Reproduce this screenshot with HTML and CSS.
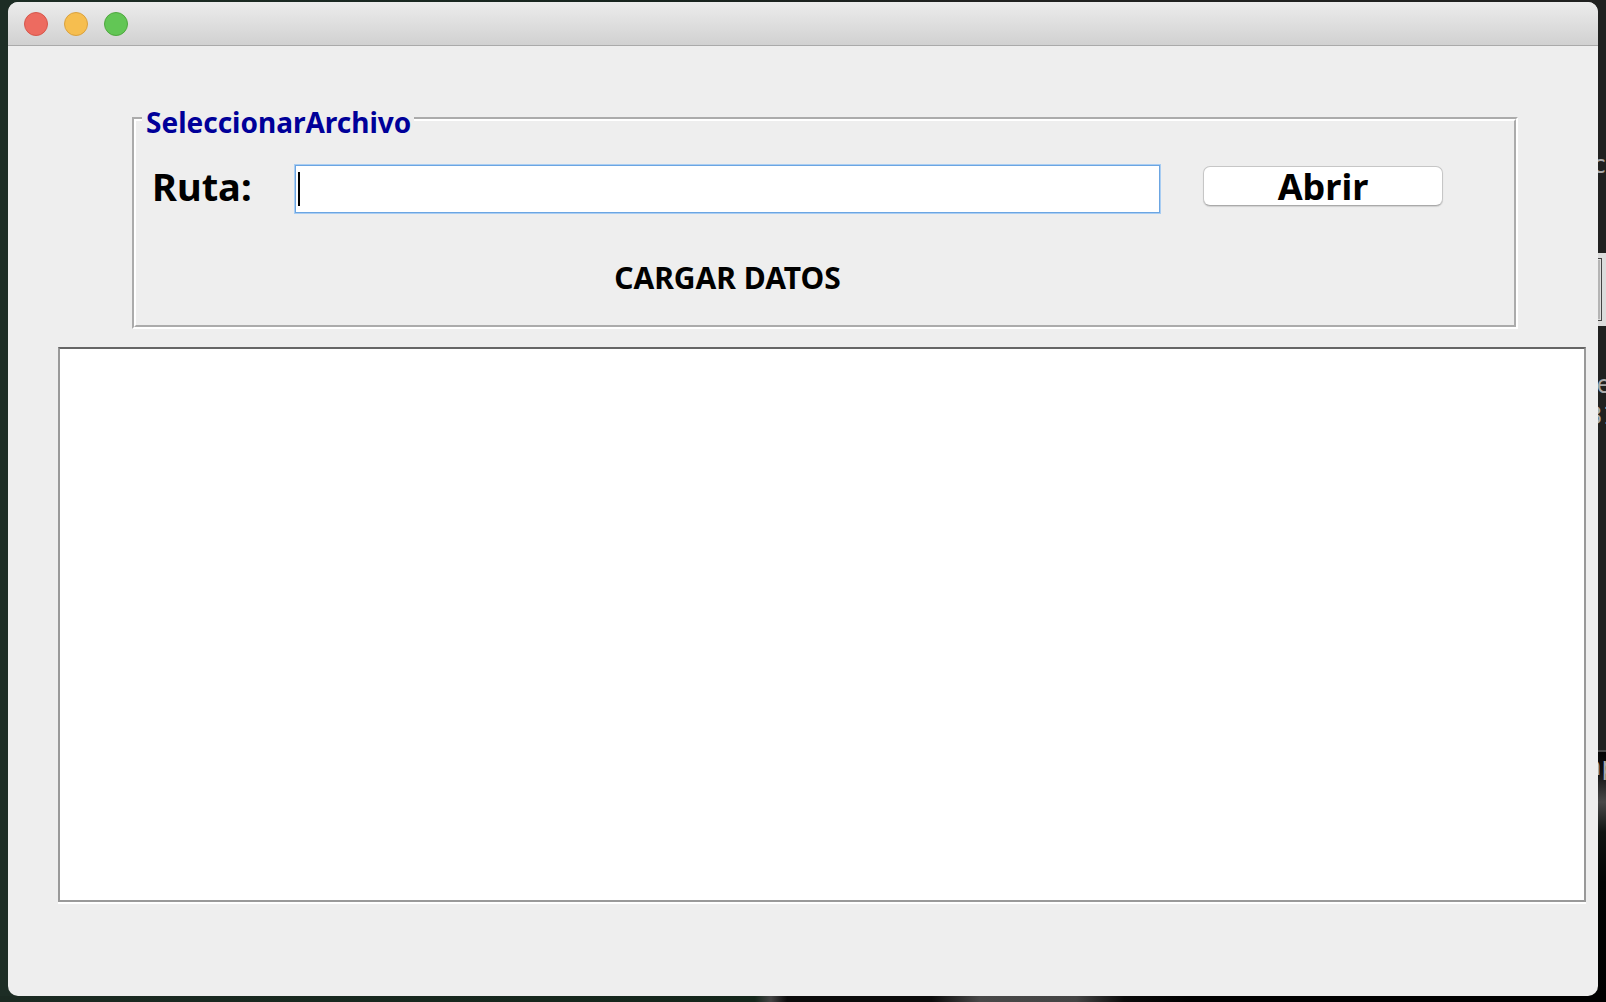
FILE: index.html
```html
<!DOCTYPE html>
<html lang="es">
<head>
<meta charset="utf-8">
<meta name="viewport" content="width=device-width, initial-scale=1">
<title>Seleccionar archivo</title>
<link rel="stylesheet" href="styles.css">
</head>
<body class="desktop">
<div class="backdrop" aria-hidden="true">
  <div class="panel panel-light"></div>
  <div class="panel panel-dark"></div>
  <div class="photo-side"></div>
  <div class="photo-bottom"></div>
  <span class="scrap scrap-c">c.</span>
  <span class="scrap scrap-e">e</span>
  <span class="scrap scrap-n">31</span>
  <span class="scrap scrap-p">np</span>
</div>
<main class="window">
  <header class="titlebar">
    <button class="light light-close" type="button" aria-label="Cerrar"></button>
    <button class="light light-min" type="button" aria-label="Minimizar"></button>
    <button class="light light-zoom" type="button" aria-label="Ampliar"></button>
  </header>
  <form class="content">
    <fieldset class="group">
      <legend class="group-title">SeleccionarArchivo</legend>
      <div class="fields">
        <label class="label" for="ruta">Ruta:</label>
        <div class="path">
          <input class="path-input" id="ruta" type="text">
          <span class="caret"></span>
        </div>
        <button class="open" type="button">Abrir</button>
        <button class="load" type="button">CARGAR DATOS</button>
      </div>
    </fieldset>
    <textarea class="output" aria-label="Datos"></textarea>
  </form>
</main>
</body>
</html>
```
FILE: styles.css
```css
* {
  box-sizing: border-box;
}

.desktop {
  margin: 0;
  min-height: 100vh;
  padding: 2px 8px 6px;
  display: flex;
  background: linear-gradient(90deg, #1d2d25, #17241e 40%, #202120 60%, #202120);
  font-family: "Noto Sans", "Open Sans", sans-serif;
  font-weight: 700;
  color: #000;
}

/* Other windows and the wallpaper behind the dialog */
.backdrop {
  position: absolute;
  inset: 0;
  overflow: hidden;
}

.panel,
.photo-side,
.photo-bottom,
.scrap {
  position: absolute;
}

.panel-light {
  top: 253px;
  right: 0;
  width: 20px;
  height: 73px;
  background: #dcdcdc;
}

.panel-dark {
  top: 258px;
  right: 4px;
  width: 20px;
  height: 63px;
  border: 1px solid #444;
  background: #b4b4b4;
  box-shadow: inset 0 0 0 1px #ddd;
}

.photo-side {
  top: 750px;
  right: 0;
  bottom: 0;
  width: 20px;
  border-top: 2px solid #4a4a4a;
  background: linear-gradient(#050505, #111 20px, #484848 50px, #101412 80px, #020403 130px, #000);
}

.photo-bottom {
  left: 0;
  right: 0;
  bottom: 0;
  height: 6px;
  background: linear-gradient(90deg, #1b2a22, #14261b 47%, #444 48%, #0b0b0b 49%, #0b0b0b 58%, #484848 61%, #444 67%, #0b0b0b 70%, #000 74%);
}

.scrap {
  color: #aaa;
  font: 24px/28px "DejaVu Sans Mono", monospace;
}

.scrap-c {
  top: 151px;
  right: -15px;
}

.scrap-e {
  top: 371px;
  right: -5px;
}

.scrap-n {
  top: 402px;
  right: -11px;
}

.scrap-p {
  top: 753px;
  right: -10px;
}

.window {
  position: relative;
  flex: 1;
  display: flex;
  flex-direction: column;
  overflow: hidden;
  border-radius: 10px;
  background: #eee;
}

.titlebar {
  display: flex;
  align-items: center;
  gap: 16px;
  height: 44px;
  padding: 0 16px;
  border-bottom: 1px solid #aaa;
  background: linear-gradient(#ececec, #d1d1d1);
}

.light {
  width: 24px;
  height: 24px;
  padding: 0;
  border: 1px solid;
  border-radius: 50%;
}

.light-close {
  background: #ed6b60;
  border-color: #d5574c;
}

.light-min {
  background: #f6be4f;
  border-color: #d9a13f;
}

.light-zoom {
  background: #62c655;
  border-color: #4fa73f;
}

.content {
  flex: 1;
  display: flex;
  flex-direction: column;
  gap: 18px;
  padding: 53px 12px 94px 50px;
}

.group {
  min-width: 0;
  margin: 0 68px 0 74px;
  padding: 0 71px 30px 16px;
  border: 4px groove #fff;
}

.group-title {
  margin-left: -10px;
  padding: 6px 3px 0 4px;
  color: #009;
  font-size: 28px;
  line-height: 34px;
}

.fields {
  display: grid;
  grid-template-columns: 100px minmax(0, 1fr) 240px;
  align-items: center;
  column-gap: 43px;
  row-gap: 48px;
  padding-top: 26px;
}

.label {
  margin-bottom: 6px;
  font-size: 38px;
  line-height: 42px;
}

.path {
  position: relative;
  display: flex;
}

.path-input {
  width: 100%;
  height: 48px;
  padding: 0 8px;
  border: 1px solid #6ba5e2;
  outline: 1px solid #a9cdf2;
  background: #fff;
  font: inherit;
  font-size: 36px;
}

.caret {
  position: absolute;
  top: 7px;
  left: 3px;
  width: 2px;
  height: 34px;
  background: #000;
}

.open,
.load {
  padding: 0;
  color: #000;
  font: inherit;
}

.open {
  height: 40px;
  margin-bottom: 6px;
  padding-top: 2px;
  border: 1px solid #c6c6c6;
  border-bottom-color: #aaa;
  border-radius: 7px;
  background: #fff;
  box-shadow: 0 1px 1px #d0d0d0;
  font-size: 36px;
  line-height: 36px;
}

.load {
  grid-column: 2;
  justify-self: center;
  border: 0;
  background: none;
  font-size: 30px;
  line-height: 34px;
}

.output {
  flex: 1;
  width: 100%;
  padding: 8px;
  border: 2px solid #999;
  border-top-color: #666;
  border-radius: 0;
  outline: 0;
  resize: none;
  background: #fff;
  box-shadow: 0 2px 0 #fff;
  font: inherit;
  font-size: 28px;
}
```
